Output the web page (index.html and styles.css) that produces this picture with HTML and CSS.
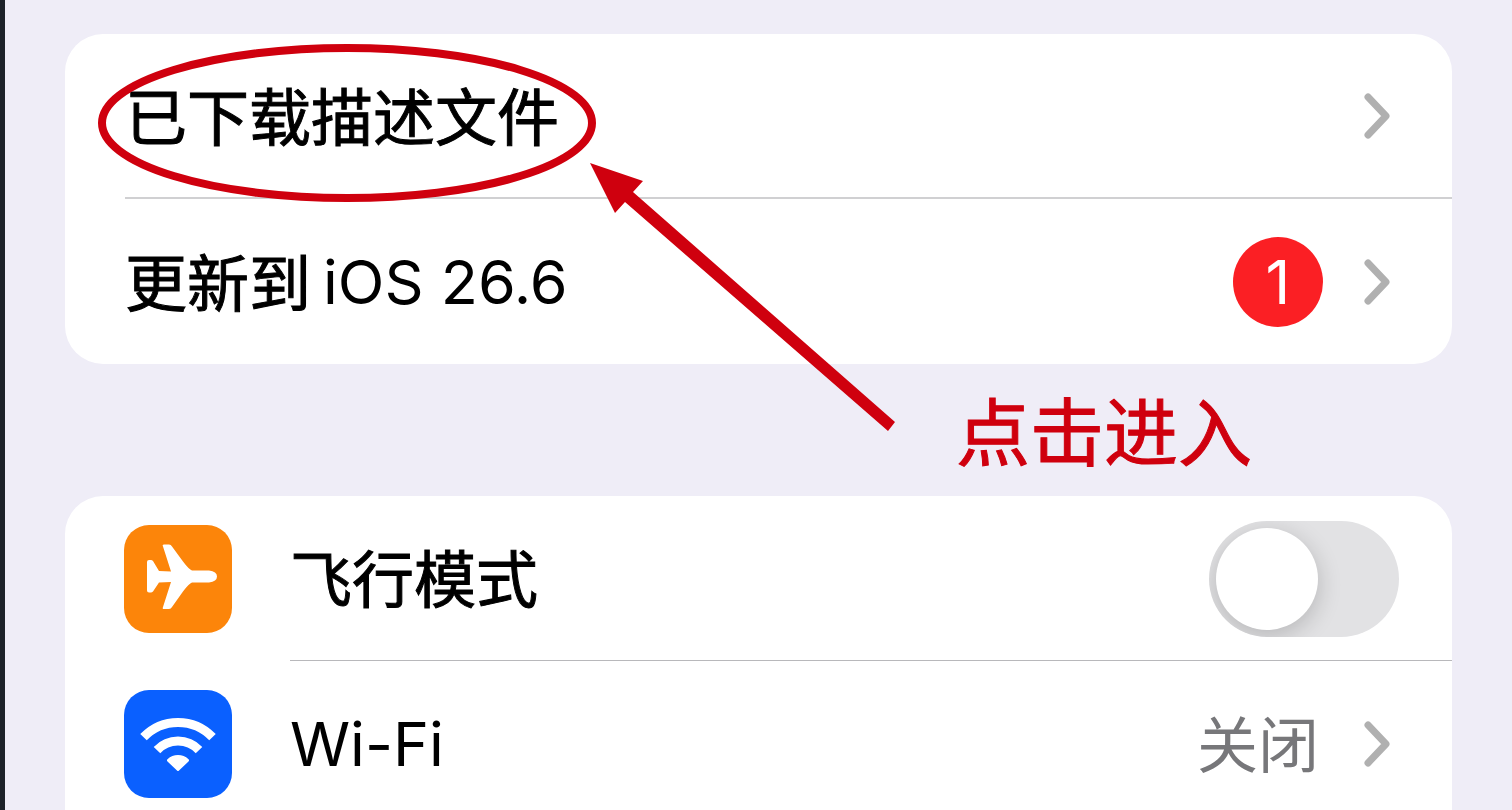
FILE: index.html
```html
<!DOCTYPE html>
<html lang="zh-CN">
<head>
<meta charset="utf-8">
<meta name="viewport" content="width=device-width, initial-scale=1">
<title>设置</title>
<link rel="stylesheet" href="styles.css">
</head>
<body>
<main class="screen">
  <section class="card">
    <a class="row" href="#profile">
      <span class="content divided">
        <span class="label han">已下载描述文件</span>
        <svg class="chevron" viewBox="0 0 28 46" aria-hidden="true"><path d="M5 4 23 23 5 42"/></svg>
      </span>
    </a>
    <a class="row" href="#update">
      <span class="content">
        <span class="label mixed"><span class="han">更新到</span> <span>iOS 26.6</span></span>
        <span class="badge">1</span>
        <svg class="chevron" viewBox="0 0 28 46" aria-hidden="true"><path d="M5 4 23 23 5 42"/></svg>
      </span>
    </a>
  </section>

  <section class="card continued">
    <div class="row">
      <svg class="icon icon-plane" viewBox="0 0 108 108" aria-hidden="true">
        <path d="M23 37q0-2 2-2h2q1 0 2 1l6 10 12 0.500-8-25q-1-2 1-2h5q2 0 3 2l11 15q6 8 9 9h17q8 1 8 6t-8 6H68q-3 1-9 9L48 82q-1 2-3 2h-5q-2 0-1-2l8-25-12 0.500-6 9q-1 1-2 1h-2q-2 0-2-2z"/>
      </svg>
      <span class="content divided thin">
        <label class="label han" for="airplane">飞行模式</label>
        <input class="switch" id="airplane" type="checkbox" role="switch">
      </span>
    </div>
    <a class="row" href="#wifi">
      <svg class="icon icon-wifi" viewBox="0 0 108 108" aria-hidden="true">
        <path class="wave" d="M19.500 47.200A47.700 47.700 0 0 1 88.500 47.200M33 60.200A28.800 28.800 0 0 1 75 60.200"/>
        <path d="M43.500 71.500q-1.200-1.200 0-2.300Q48 65 54 65t10.500 4.200q1.200 1.100 0 2.300L55 80.500q-1 1-2 0z"/>
      </svg>
      <span class="content">
        <span class="label">Wi-Fi</span>
        <span class="value">关闭</span>
        <svg class="chevron" viewBox="0 0 28 46" aria-hidden="true"><path d="M5 4 23 23 5 42"/></svg>
      </span>
    </a>
  </section>

  <svg class="markup" width="900" height="440" viewBox="0 0 900 440" aria-hidden="true">
    <ellipse cx="342" cy="123" rx="245" ry="75"/>
    <path d="M585 163 638 181 628 192 890 422 883 431 620 202 610 213z"/>
  </svg>
  <p class="callout">点击进入</p>
</main>
</body>
</html>
```
FILE: styles.css
```css
* {
  box-sizing: border-box;
}

body {
  margin: 0;
  background: #efedf7;
  color: #000;
  font-family: Inter, "Noto Sans CJK SC", sans-serif;
  font-size: 61px;
  line-height: 90px;
}

.screen {
  position: relative;
  display: flex;
  flex-direction: column;
  gap: 132px;
  height: 100vh;
  padding: 34px 60px 0;
  border-left: 5px solid #1d2229;
  overflow: hidden;
}

.card {
  flex: none;
  background: #fff;
  border-radius: 38px;
}

.continued {
  flex: 1 0 auto;
  border-radius: 38px 38px 0 0;
}

.row {
  display: flex;
  align-items: center;
  gap: 58px;
  padding-left: 60px;
  color: inherit;
  text-decoration: none;
}

.content {
  flex: 1;
  display: flex;
  align-items: center;
  gap: 40px;
  min-height: 165px;
  padding-right: 61px;
}

.icon {
  flex: none;
  width: 108px;
  height: 108px;
  margin-left: -1px;
  border-radius: 25px;
  fill: #fff;
}

.divided {
  border-bottom: 2px solid #d0d0d2;
}

.thin {
  border-bottom: 1px solid #b8b8bb;
}

.label {
  flex: 1;
  white-space: nowrap;
}

.han,
.value {
  padding-bottom: 4px;
  font-family: "Noto Sans CJK SC", sans-serif;
}

.han {
  font-size: 62px;
  -webkit-text-stroke: 1px currentColor;
}

.mixed {
  display: flex;
  align-items: center;
  gap: 12px;
}

.value {
  margin-right: 4px;
  color: #77777a;
}

.badge {
  width: 90px;
  height: 90px;
  border-radius: 50%;
  background: #fb1f24;
  color: #fff;
  text-align: center;
}

.chevron {
  flex: none;
  width: 28px;
  height: 46px;
  fill: none;
  stroke: #b0b0b0;
  stroke-width: 7px;
  stroke-linecap: round;
  stroke-linejoin: round;
}

.icon-plane {
  background: #fc850a;
}

.icon-wifi {
  background: #0a60ff;
}

.wave {
  fill: none;
  stroke: #fff;
  stroke-width: 9px;
}

.switch {
  appearance: none;
  display: flex;
  align-items: center;
  width: 190px;
  height: 116px;
  margin: 2px -8px 0 0;
  padding: 0 7px;
  border-radius: 58px;
  background: #e2e2e4;
  overflow: hidden;
}

.switch::before {
  content: "";
  width: 102px;
  height: 102px;
  border-radius: 50%;
  background: #fff;
  box-shadow: 0 6px 24px rgba(0, 0, 0, 0.2);
}

.switch:checked {
  justify-content: flex-end;
  background: #34c759;
}

.markup {
  position: absolute;
  top: 0;
  left: 0;
  fill: #cf000e;
  pointer-events: none;
}

.markup ellipse {
  fill: none;
  stroke: #cf000e;
  stroke-width: 8px;
}

.callout {
  position: absolute;
  top: 380px;
  left: 951px;
  margin: 0;
  color: #cf000e;
  font-size: 74px;
  line-height: 106px;
  -webkit-text-stroke: 1px currentColor;
}
```
